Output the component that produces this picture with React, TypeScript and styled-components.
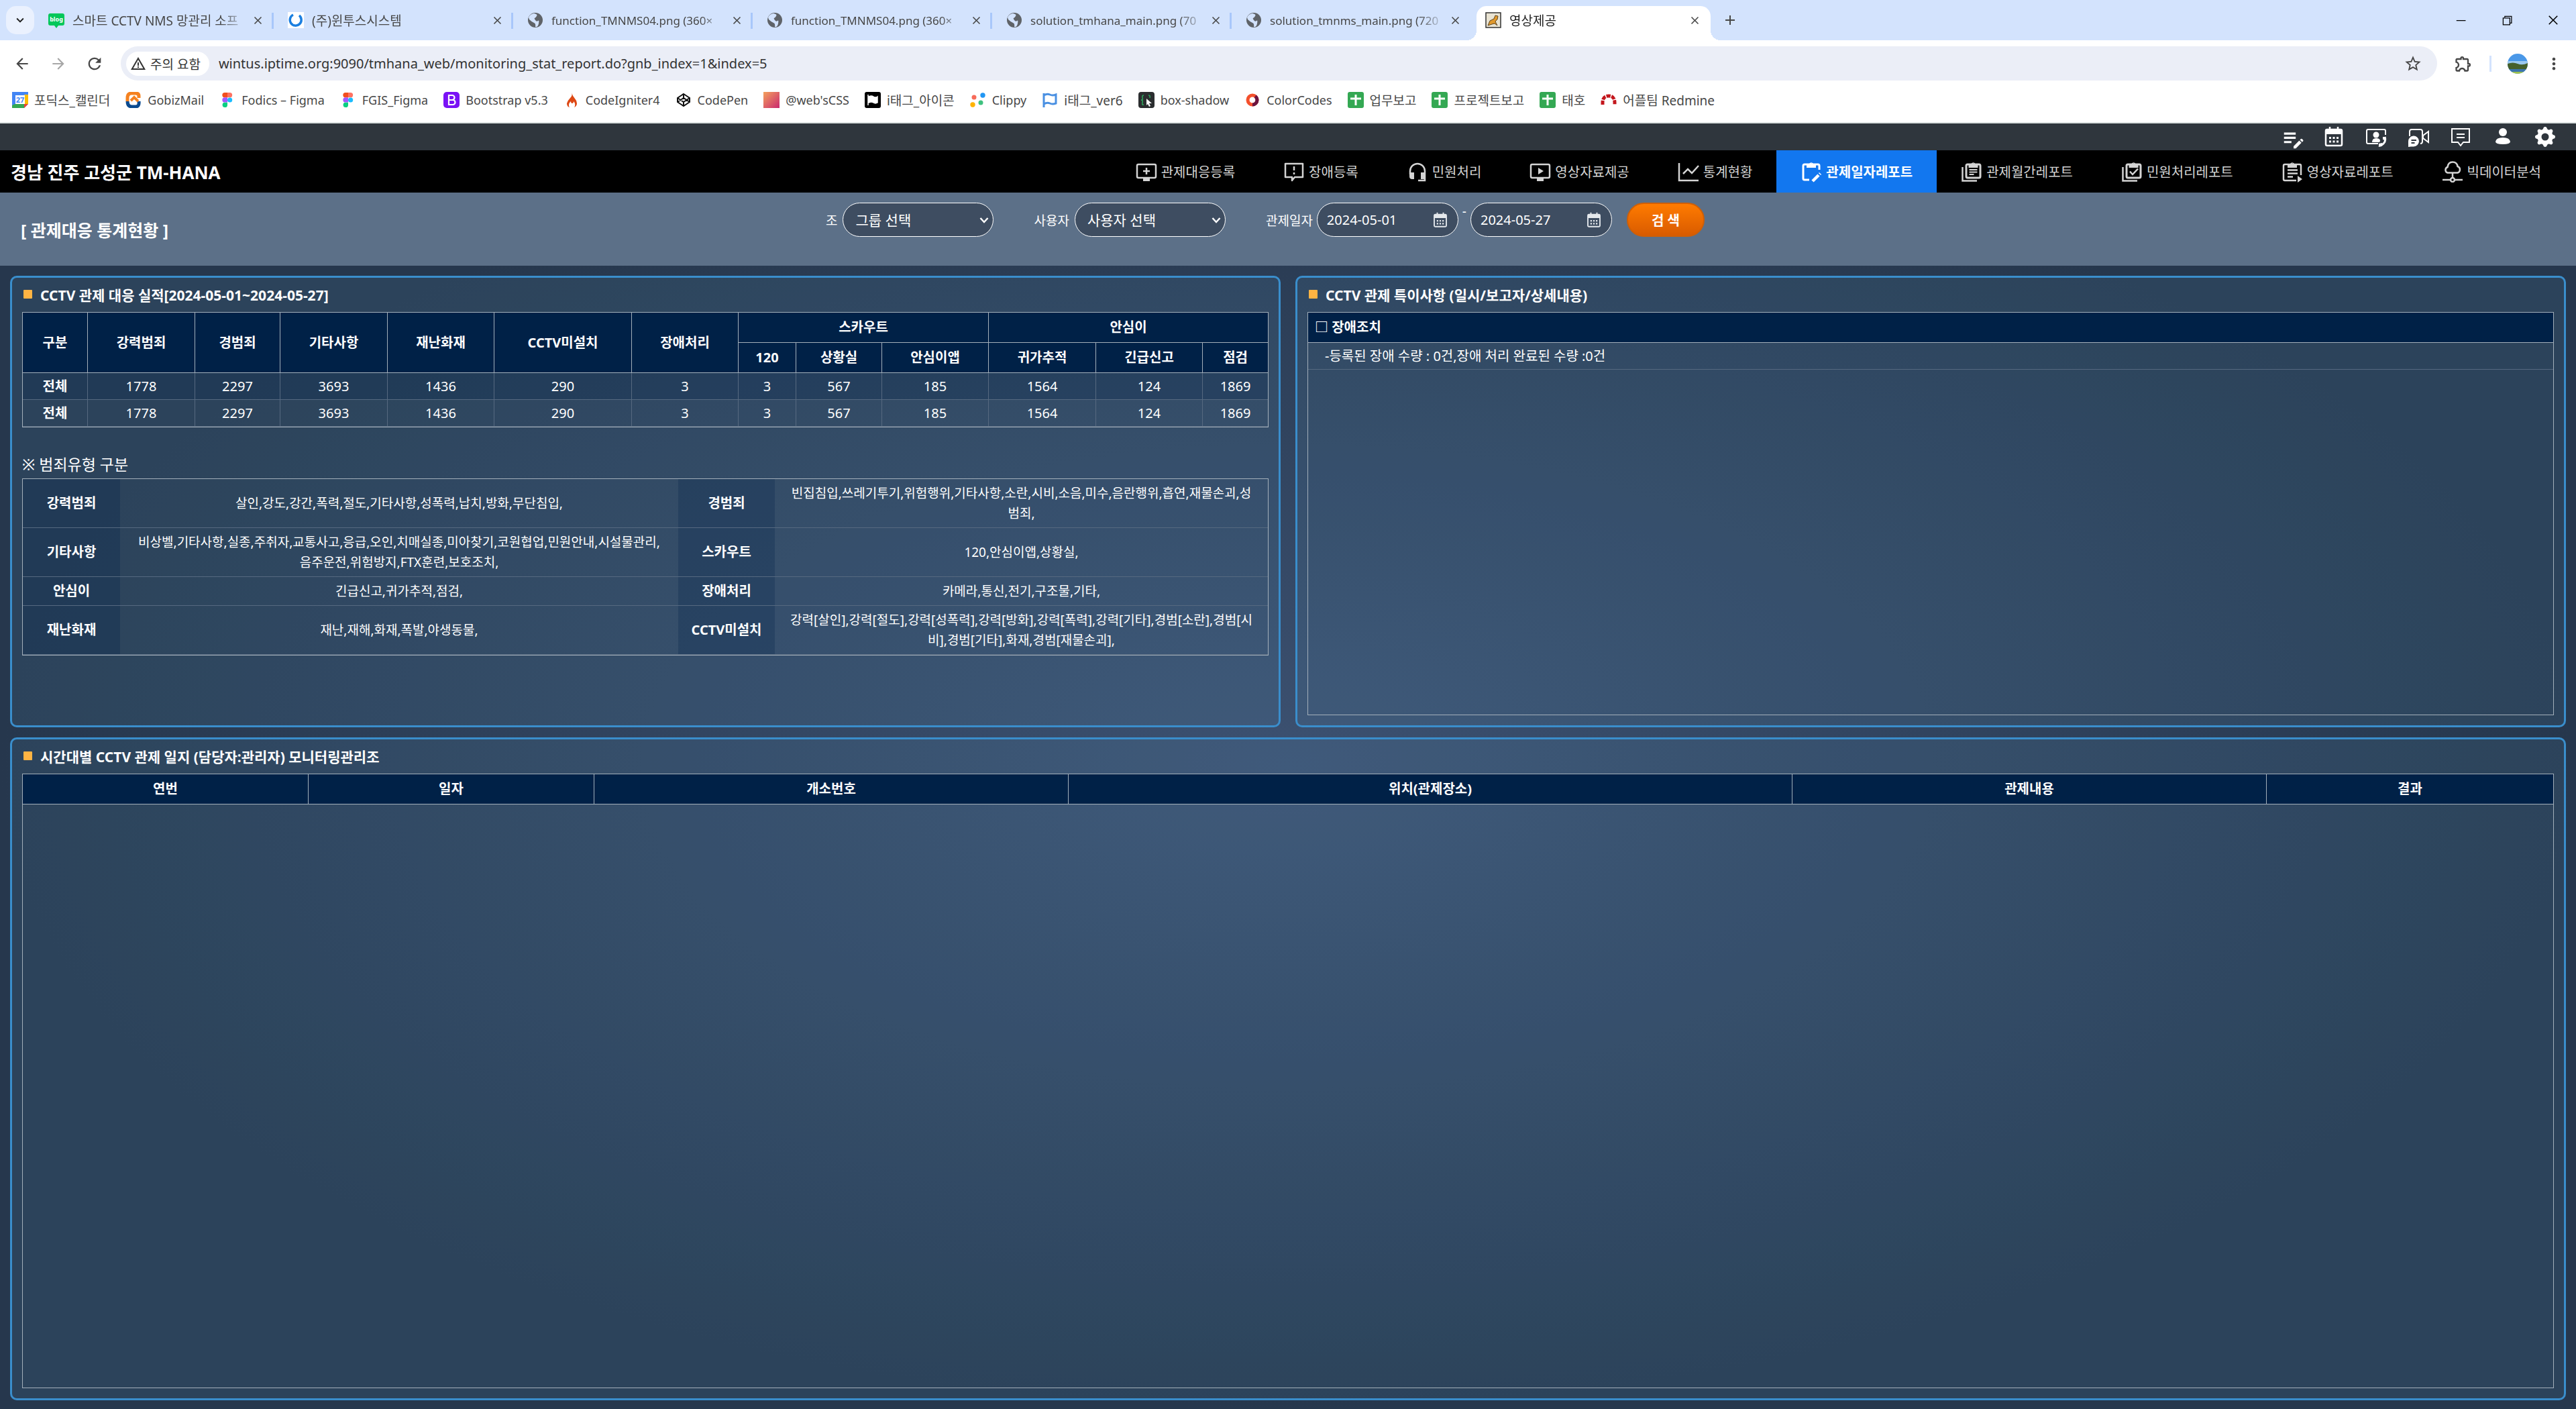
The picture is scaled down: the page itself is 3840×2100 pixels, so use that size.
import React, { useState } from "react";
import styled, { createGlobalStyle, css } from "styled-components";
import { MdArrowBack, MdArrowForward, MdRefresh, MdClose, MdAdd, MdKeyboardArrowDown, MdEditNote, MdMoreVert, MdOutlineExtension, MdStarBorder, MdWarningAmber } from "react-icons/md";
import { BsGearFill } from "react-icons/bs";
import { VscChromeMinimize, VscChromeRestore, VscChromeClose } from "react-icons/vsc";

const line = "#a3afba";
const softLine = "#566980";
const navy = "#002147";

const GlobalStyle = createGlobalStyle`
  *, *::before, *::after { box-sizing: border-box; }
  body { margin: 0; }
  body, button, input, select, table {
    font-family: "Noto Sans", "Noto Sans CJK KR", sans-serif;
  }
  button { border: 0; padding: 0; background: none; color: inherit; cursor: pointer; }
  h1, h2, h3, p { margin: 0; }
`;

const Screen = styled.div`
  display: flex;
  flex-direction: column;
  min-height: 100vh;
  background: #fff;
`;

/* ---------- browser frame ---------- */

const TabStrip = styled.div`
  display: flex;
  align-items: center;
  height: 60px;
  padding-left: 9px;
  background: #d3e3fd;
  color: #1f1f1f;
`;

const TabSearch = styled.button`
  display: grid;
  place-items: center;
  width: 42px;
  height: 42px;
  border-radius: 15px;
  background: #eaf1fe;
`;

const Tab = styled.div<{ $active?: boolean; $hangul?: boolean }>`
  position: relative;
  display: flex;
  align-items: center;
  flex: 0 1 357px;
  min-width: 0;
  gap: 12px;
  height: 51px;
  align-self: flex-end;
  padding: 0 12px 9px 21px;
  font-size: ${(p) => (p.$hangul ? 19 : 17)}px;
  color: ${(p) => (p.$active ? "#1f1f1f" : "#474747")};
  ${(p) =>
    p.$active
      ? css`
          flex-basis: 349px;
          padding: 0 12px 9px 13px;
          margin-left: 8px;
          border-radius: 15px 15px 0 0;
          background: #fff;
          &::before,
          &::after {
            content: "";
            position: absolute;
            bottom: 0;
            width: 15px;
            height: 15px;
          }
          &::before {
            right: 100%;
            background: radial-gradient(circle at 0 0, transparent 15px, #fff 15px);
          }
          &::after {
            left: 100%;
            background: radial-gradient(circle at 100% 0, transparent 15px, #fff 15px);
          }
        `
      : ""}
`;

const TabDivider = styled.i<{ $hidden?: boolean }>`
  position: absolute;
  right: 0;
  top: 10px;
  width: 3px;
  height: 24px;
  background: #a8c7fa;
  display: ${(p) => (p.$hidden ? "none" : "block")};
`;

const TabTitle = styled.span`
  flex: 1;
  min-width: 0;
  white-space: nowrap;
  mask-image: linear-gradient(to right, #000 88%, transparent 104%);
`;

const IconButton = styled.button<{ $size?: number; $dim?: boolean }>`
  display: grid;
  place-items: center;
  flex: none;
  width: ${(p) => p.$size ?? 24}px;
  height: ${(p) => p.$size ?? 24}px;
  color: ${(p) => (p.$dim ? "#a7a7a7" : "#474747")};
`;

const WindowButtons = styled.div`
  display: flex;
  gap: 45px;
  margin-left: auto;
  padding-right: 22px;
  color: #000;
`;

const AddressRow = styled.div`
  display: flex;
  align-items: center;
  gap: 24px;
  height: 69px;
  padding: 0 18px;
  background: #fff;
`;

const Omnibox = styled.div`
  display: flex;
  align-items: center;
  flex: 1;
  gap: 12px;
  height: 51px;
  padding: 0 22px 0 8px;
  border-radius: 26px;
  background: #ebeef7;
`;

const SiteChip = styled.button`
  display: flex;
  align-items: center;
  gap: 6px;
  height: 36px;
  padding: 0 13px 0 6px;
  border-radius: 18px;
  background: #fff;
  font-size: 19px;
  color: #333;
`;

const UrlInput = styled.input`
  flex: 1;
  border: 0;
  outline: 0;
  background: none;
  font-size: 20px;
  color: #333;
`;

const Separator = styled.i`
  width: 3px;
  height: 24px;
  background: #d3e3fd;
`;

const Bookmarks = styled.nav`
  display: flex;
  gap: 23px;
  height: 53px;
  padding: 8px 18px 0;
  background: #fff;
`;

const Bookmark = styled.a<{ $hangul: boolean }>`
  display: flex;
  align-items: center;
  gap: 9px;
  height: 24px;
  font-size: ${(p) => (p.$hangul ? 19 : 18)}px;
  white-space: nowrap;
  color: #474747;
  text-decoration: none;
`;

/* ---------- application ---------- */

const AppArea = styled.div`
  display: flex;
  flex-direction: column;
  flex: 1;
  border-top: 2px solid #dde3e2;
  background: radial-gradient(ellipse closest-side, #3c5171, #26374d);
  color: #fff;
`;

const UtilityBar = styled.div`
  display: flex;
  align-items: center;
  justify-content: flex-end;
  gap: 31px;
  height: 40px;
  padding-right: 30px;
  background: #2f363d;
`;

const UtilityButton = styled.button`
  display: grid;
  place-items: center;
  width: 32px;
  height: 32px;
  color: #fff;
`;

const Header = styled.header`
  display: flex;
  align-items: center;
  justify-content: space-between;
  height: 63px;
  padding: 0 16px;
  background: #000;
`;

const Brand = styled.h1`
  font-size: 26px;
  font-weight: 700;
`;

const MainNav = styled.nav`
  display: flex;
  height: 100%;
`;

const NavItem = styled.a<{ $active?: boolean }>`
  display: flex;
  align-items: center;
  gap: 6px;
  padding: 0 36px;
  font-size: 20px;
  white-space: nowrap;
  text-decoration: none;
  font-weight: ${(p) => (p.$active ? 700 : 400)};
  color: ${(p) => (p.$active ? "#fff" : "#d4d4d4")};
  background: ${(p) => (p.$active ? "#1277ef" : "transparent")};
`;

const SearchBand = styled.section`
  display: flex;
  align-items: center;
  height: 109px;
  padding-left: 31px;
  background: #5c7088;
`;

const PageTitle = styled.h2`
  flex: 0 0 1200px;
  font-size: 25px;
  font-weight: 700;
`;

const Filters = styled.form`
  display: flex;
  align-items: center;
  align-self: flex-start;
  gap: 8px;
  padding-top: 15px;
`;

const Field = styled.label`
  display: flex;
  align-items: center;
  gap: 8px;
  margin-right: 52px;
  font-size: 19px;
`;

const pill = css`
  height: 51px;
  border: 1px solid #fff;
  border-radius: 26px;
  background-color: #3e4d61;
  color: #fff;
  font-size: 21px;
`;

const Select = styled.select`
  ${pill}
  width: 225px;
  padding: 0 10px 0 18px;
  appearance: none;
  background-image: url("data:image/svg+xml,%3Csvg xmlns='http://www.w3.org/2000/svg' width='14' height='10'%3E%3Cpath d='M1.5 2 7 8l5.500-6' fill='none' stroke='white' stroke-width='2.500'/%3E%3C/svg%3E");
  background-repeat: no-repeat;
  background-position: right 6px center;
`;

const DateField = styled.span`
  ${pill}
  display: flex;
  align-items: center;
  justify-content: space-between;
  width: 211px;
  padding: 0 14px;
`;

const DateInput = styled.input`
  width: 130px;
  border: 0;
  padding: 0;
  outline: 0;
  background: none;
  color: inherit;
  font-size: 20px;
`;

const DateButton = styled.button`
  display: grid;
  color: #e4e8ec;
`;

const DateRange = styled.div`
  display: flex;
  gap: 6px;
  margin-right: 14px;
  font-size: 19px;
`;

const DateLabel = styled.span`
  align-self: center;
`;

const SearchButton = styled.button`
  width: 116px;
  height: 51px;
  border: 2px solid #d05f06;
  border-radius: 26px;
  background: linear-gradient(#ff7b00, #d95b00);
  color: #fff;
  font-size: 20px;
  font-weight: 700;
`;

const Panels = styled.main`
  flex: 1;
  display: grid;
  grid-template-columns: repeat(2, minmax(0, 1fr));
  grid-template-rows: 15fr 22fr;
  gap: 15px 22px;
  padding: 15px 15px 13px;
`;

const Panel = styled.section<{ $wide?: boolean }>`
  display: flex;
  flex-direction: column;
  grid-column: ${(p) => (p.$wide ? "1 / -1" : "auto")};
  padding: 0 15px 15px;
  border: 3px solid #3a8ecc;
  border-radius: 10px;
  background: rgba(100, 180, 220, 0.1);
`;

const PanelTitle = styled.h3`
  display: flex;
  align-items: center;
  gap: 12px;
  height: 51px;
  padding: 0 0 2px 2px;
  font-size: 21px;
  font-weight: 700;
  &::before {
    content: "";
    width: 13px;
    height: 13px;
    border-radius: 1px;
    background: #ffb443;
  }
`;

const Frame = styled.div<{ $fill?: boolean }>`
  flex: ${(p) => (p.$fill ? 1 : "none")};
  border: 1px solid ${line};
`;

const Table = styled.table`
  width: 100%;
  table-layout: fixed;
  border-spacing: 0;
  font-size: 20px;
  line-height: 30px;
  text-align: center;
  th,
  td {
    padding: 0;
  }
`;

const HeadCell = styled.th<{ $left?: boolean; $edge?: boolean }>`
  height: 45px;
  border-bottom: 1px solid ${line};
  border-right: ${(p) => (p.$edge ? "0" : `1px solid ${line}`)};
  background: ${navy};
  text-align: ${(p) => (p.$left ? "left" : "center")};
  && {
    padding: ${(p) => (p.$left ? "0 10px" : "0")};
  }
`;

const StatRow = styled.tr<{ $shade?: boolean }>`
  height: 40px;
  background: ${(p) => (p.$shade ? "rgba(0, 33, 71, 0.25)" : "transparent")};
  td,
  th {
    border-bottom: 1px solid ${softLine};
    border-right: 1px solid ${softLine};
  }
  > :last-child {
    border-right: 0;
  }
`;

const NoteCell = styled.td`
  height: 40px;
  border-bottom: 1px solid ${softLine};
  text-align: left;
  && {
    padding-left: 25px;
  }
`;

const SubTitle = styled.h3`
  margin-top: 34px;
  font-size: 23px;
  font-weight: 400;
  line-height: 42px;
`;

const KindTable = styled(Table)`
  th,
  td {
    border-bottom: 1px solid ${softLine};
  }
  th {
    background: rgba(0, 33, 71, 0.25);
  }
  td {
    padding: 6px 20px;
    font-size: 19px;
  }
`;

/* ---------- icons ---------- */

const IconSvg = styled.svg`
  display: block;
  flex: none;
`;

type SvgProps = { size?: number; children: React.ReactNode };
const Line = ({ size = 32, children }: SvgProps) => (
  <IconSvg width={size} height={size} viewBox="0 0 32 32" fill="none" stroke="currentColor" strokeWidth="2.5" aria-hidden="true">
    {children}
  </IconSvg>
);
const Mark = ({ children }: SvgProps) => (
  <IconSvg width="24" height="24" viewBox="0 0 24 24" aria-hidden="true">
    {children}
  </IconSvg>
);

const Calendar = ({ size }: { size?: number }) => (
  <Line size={size}>
    <path d="M6 5h20q2 0 2 2v20q0 2-2 2H6q-2 0-2-2V7q0-2 2-2z" />
    <path d="M4 5h24v7H4z" fill="currentColor" stroke="none" />
    <path d="M10 1v6M22 1v6" />
    <path d="M9 17.500h3m2.500 0h3m2.500 0h3M9 23h3m2.500 0h3m2.500 0h3" strokeWidth="3" />
  </Line>
);
const MonitorPlus = () => (
  <Line><rect x="2" y="5" width="28" height="20" rx="2" /><path d="M16 10v10M11 15h10" /><path d="M11 28h10" strokeWidth="4" /></Line>
);
const AlertBubble = () => (
  <Line><path d="M3 4h26v20H17l-4 5v-5H3z" strokeLinejoin="round" /><path d="M16 8v6M16 17v3" /></Line>
);
const Headset = () => (
  <Line><path d="M5 20v-5a11 11 0 0 1 22 0v14H17" /><path d="M4 17h7v10H8q-4 0-4-4zM21 17h7v10h-7z" fill="currentColor" stroke="none" /></Line>
);
const MonitorPlay = () => (
  <Line><rect x="2" y="5" width="28" height="20" rx="2" /><path d="M13 10l8 5-8 5z" fill="currentColor" stroke="none" /><path d="M11 28h10" strokeWidth="4" /></Line>
);
const ChartLine = () => (
  <Line><path d="M2 3v26h29M8 19l7-7 6 6L31 7" /></Line>
);
const Clip = ({ x = 0 }: { x?: number }) => (
  <path transform={`translate(${x} 0)`} d="M9 4h4a3.500 3.500 0 0 1 6 0h4v6H9z M16 3.500a1.300 1.300 0 1 0 .1 0z" fill="currentColor" fillRule="evenodd" stroke="none" />
);
const ClipboardEdit = () => (
  <Line><path d="M13 28H6q-2 0-2-2V7q0-2 2-2h20q2 0 2 2v6" strokeWidth="3" /><Clip /><path d="M18 30l9-9M28.500 19.500l1-1" strokeWidth="4.500" /></Line>
);
const ClipboardCopy = ({ children }: { children: React.ReactNode }) => (
  <Line><rect x="8" y="5" width="21" height="20" rx="2" strokeWidth="3" /><Clip x={2.5} />{children}<path d="M2.500 9v20.500H24" /></Line>
);
const ClipboardPlay = () => (
  <Line><path d="M22 29H5q-2 0-2-2V7q0-2 2-2h22q2 0 2 2v14" /><Clip /><path d="M9 13.500h15M9 18.500h15M9 23.500h8" /><path d="M24 22l7 5-7 5z" fill="currentColor" stroke="none" /></Line>
);
const CloudNet = () => (
  <Line><path d="M8.500 17.500a4.500 4.500 0 0 1 0-8.500q1-7.500 7.500-7.500T23.500 8a5 5 0 0 1 0 9.500zM16 18v8M1 28h30" /><circle cx="16" cy="28" r="3" fill="#000" /></Line>
);
const ContactPhone = () => (
  <Line><path d="M19 26H4q-2 0-2-2V7q0-2 2-2h24q2 0 2 2v6" strokeWidth="2" /><circle cx="16" cy="13" r="4.500" fill="currentColor" stroke="none" /><path d="M10 24q0-6 6-6t6 4l-1 2z" fill="currentColor" stroke="none" /><path d="M29 16q2 6-2 10t-7 3" strokeWidth="3" /><path d="M26 16h4v5l-4-1zM20 26l5-1v5h-5z" fill="currentColor" stroke="none" /></Line>
);
const VideoChat = () => (
  <Line><path d="M3 15V8q0-3 3-3h13q3 0 3 3v15q0 3-3 3M31 8v16l-8-6v-4z" strokeWidth="2" /><path d="M1 31v-8a8 8 0 1 1 8 7.500H5z" fill="currentColor" stroke="none" /><path d="M5.500 21h7.500M5.500 25h5" stroke="#2f363d" strokeWidth="2" /></Line>
);
const MessageBox = () => (
  <Line><path d="M3 4h26v20h-9l-4 5-4-5H3z" strokeWidth="2" /><path d="M10 12h12M10 17h12" strokeWidth="2" /></Line>
);
const Person = () => (
  <Line><circle cx="16" cy="9" r="6" fill="currentColor" stroke="none" /><path d="M5 23q1-6 11-6t11 6q0 4-11 4T5 23z" fill="currentColor" stroke="none" /></Line>
);

const Figma = () => (
  <Mark><path d="M12 1H8a3.600 3.600 0 0 0 0 7.300h4z" fill="#f24e1e" /><path d="M12 1h3.500a3.600 3.600 0 0 1 0 7.300H12z" fill="#ff7262" /><path d="M12 8.300H8a3.600 3.600 0 0 0 0 7.300h4z" fill="#a259ff" /><circle cx="15.600" cy="12" r="3.600" fill="#1abcfe" /><path d="M12 15.700H8a3.700 3.700 0 1 0 4 3.700z" fill="#0acf83" /></Mark>
);
const Sheet = () => (
  <Mark><rect width="24" height="24" rx="3" fill="#34a853" /><path d="M12 4v16M4 10h16" stroke="#fff" strokeWidth="3" /></Mark>
);

const bookmarks: [string, React.ReactNode][] = [
  ["포딕스_캘린더", <Mark><path d="M0 0h24v18l-6 6H0z" fill="#4285f4" /><path d="M18 4h6v14h-6z" fill="#fbbc04" /><path d="M4 18h14v6H0v-4z" fill="#34a853" /><path d="M24 18l-6 6v-6z" fill="#ea4335" /><path d="M5 5h14v13H5z" fill="#fff" /><text x="12" y="16" fontSize="11" fontWeight="700" textAnchor="middle" fill="#4285f4">27</text></Mark>],
  ["GobizMail", <Mark><path d="M20 9V6q0-4-5-4H9Q3 2 3 9v5" fill="none" stroke="#f58220" strokeWidth="5" /><path d="M3 14q0 8 7 8h5q6 0 5-8" fill="none" stroke="#0b4a8f" strokeWidth="5" /><path d="M8 13l5-5 6 6" fill="none" stroke="#f58220" strokeWidth="4" /></Mark>],
  ["Fodics – Figma", <Figma />],
  ["FGIS_Figma", <Figma />],
  ["Bootstrap v5.3", <Mark><rect width="24" height="24" rx="5" fill="#7a12f5" /><path d="M8 5h5a3.300 3.300 0 0 1 0 7H8zM8 12h6a3.500 3.500 0 0 1 0 7H8z" fill="none" stroke="#fff" strokeWidth="2.200" /></Mark>],
  ["CodeIgniter4", <Mark><path d="M12 1q2 4-2 8t-5 8q0 5 4 6-3-5 2-9 0 3 2 3t2-3q4 4 1 9 4-2 4-6 0-4-3-7t-5-9z" fill="#dd4814" /></Mark>],
  ["CodePen", <Mark><path d="M12 3l9 6v6l-9 6-9-6V9zM12 3v6m0 6v6M3 9l9 6 9-6M3 15l9-6 9 6" fill="none" stroke="#111" strokeWidth="2" /></Mark>],
  ["@web'sCSS", <Mark><defs><linearGradient id="warm" x1="0" y1="0" x2="1" y2="1"><stop stopColor="#f4a15d" /><stop offset="1" stopColor="#c9286f" /></linearGradient></defs><rect width="24" height="24" fill="url(#warm)" /></Mark>],
  ["i태그_아이콘", <Mark><rect width="24" height="24" rx="3" fill="#000" /><path d="M5 4v16M6 7q4-2 7 0t6 0v9q-3 2-6 0t-7 0z" fill="#fff" stroke="#fff" strokeWidth="1.500" /></Mark>],
  ["Clippy", <Mark><circle cx="6" cy="8" r="3.500" fill="#f76b5a" /><circle cx="19" cy="5" r="3.700" fill="#2196f3" /><circle cx="16" cy="16" r="3.500" fill="#3fc17f" /><circle cx="4" cy="19" r="3.700" fill="#ffb300" /></Mark>],
  ["i태그_ver6", <Mark><path d="M3 2v21M3 5q5-3 9-1t9 0v13q-5 2-9 0t-9 1" fill="none" stroke="#4a90e2" strokeWidth="3" /></Mark>],
  ["box-shadow", <Mark><rect width="24" height="24" rx="4" fill="#2b2d2f" /><path d="M8 5q-3 0-2 4t-2 3q3 0 2 4t2 3M15 5q3 0 2 4" fill="none" stroke="#2f9e5a" strokeWidth="1.700" /><path d="M12 10l8 7h-4l2 4-2 1-2-4-2 2z" fill="#fff" /></Mark>],
  ["ColorCodes", <Mark><circle cx="12" cy="12" r="7" fill="none" stroke="#f4502c" strokeWidth="5" /><path d="M12 19a7 7 0 0 0 7-7 7 7 0 0 0-3-5.500" fill="none" stroke="#6b1440" strokeWidth="5" /></Mark>],
  ["업무보고", <Sheet />],
  ["프로젝트보고", <Sheet />],
  ["태호", <Sheet />],
  ["어플팀 Redmine", <Mark><path d="M3 19v-3q0-10 9-10t9 10v3" fill="none" stroke="#c3161c" strokeWidth="5" strokeDasharray="6 1.500" /></Mark>],
];

const FelineIcon = () => (
  <Mark><rect x="1" y="1" width="22" height="22" fill="#e9e3d2" stroke="#333" strokeWidth="1.500" /><path d="M4 20l3-7 6-3 2-5 4 1-1 5-3 3 3 6-4-3-4 1z" fill="#e0982c" stroke="#5c4420" /></Mark>
);
const Globe = () => (
  <Mark><circle cx="12" cy="12" r="11" fill="#5f6368" /><path d="M10 2q6 1 4 4t-3 3 1 3 4 1 1 4-5 5q1-5-2-6t-7-5l-1-3q2-5 8-6z" fill="#d3e3fd" /></Mark>
);

const tabs: { title: string; icon: React.ReactNode; active?: boolean }[] = [
  { title: "스마트 CCTV NMS 망관리 소프", icon: <Mark><path d="M3 2h18q3 0 3 3v12q0 3-3 3h-6l-3 4-3-4H3q-3 0-3-3V5q0-3 3-3z" fill="#03c75a" /><text x="12" y="14" fontSize="9" fontWeight="700" textAnchor="middle" fill="#fff">blog</text></Mark> },
  { title: "(주)윈투스시스템", icon: <Mark><rect width="24" height="24" fill="#fff" /><path d="M8 4a8.500 8.500 0 1 0 9 1" fill="none" stroke="#1b7fe0" strokeWidth="3.500" /></Mark> },
  { title: "function_TMNMS04.png (360×", icon: <Globe /> },
  { title: "function_TMNMS04.png (360×", icon: <Globe /> },
  { title: "solution_tmhana_main.png (70", icon: <Globe /> },
  { title: "solution_tmnms_main.png (720", icon: <Globe /> },
  { title: "영상제공", icon: <FelineIcon />, active: true },
];

const hasHangul = (s: string) => /[가-힣]/.test(s);

const utilities: [string, React.ReactNode][] = [
  ["메모", <MdEditNote size={38} />],
  ["달력", <Calendar />],
  ["연락처", <ContactPhone />],
  ["영상 채팅", <VideoChat />],
  ["메시지", <MessageBox />],
  ["사용자 정보", <Person />],
  ["설정", <BsGearFill size={30} />],
];

const menu: [string, React.ReactNode][] = [
  ["관제대응등록", <MonitorPlus />],
  ["장애등록", <AlertBubble />],
  ["민원처리", <Headset />],
  ["영상자료제공", <MonitorPlay />],
  ["통계현황", <ChartLine />],
  ["관제일자레포트", <ClipboardEdit />],
  ["관제월간레포트", <ClipboardCopy><path d="M12.500 13h12M12.500 16.500h12M12.500 20h7" strokeWidth="2" /></ClipboardCopy>],
  ["민원처리레포트", <ClipboardCopy><path d="M13 15.500l4 4.500 8-8.500" /></ClipboardCopy>],
  ["영상자료레포트", <ClipboardPlay />],
  ["빅데이터분석", <CloudNet />],
];

const statCols = [97, 160, 127, 160, 159, 205, 159, 86, 128, 159, 160, 159, 97];
const statHeads = ["구분", "강력범죄", "경범죄", "기타사항", "재난화재", "CCTV미설치", "장애처리"];
const subHeads = ["120", "상황실", "안심이앱", "귀가추적", "긴급신고", "점검"];
const stats = [1778, 2297, 3693, 1436, 290, 3, 3, 567, 185, 1564, 124, 1869];

const kinds = [
  ["강력범죄", "살인,강도,강간,폭력,절도,기타사항,성폭력,납치,방화,무단침입,", "경범죄", "빈집침입,쓰레기투기,위험행위,기타사항,소란,시비,소음,미수,음란행위,흡연,재물손괴,성범죄,"],
  ["기타사항", "비상벨,기타사항,실종,주취자,교통사고,응급,오인,치매실종,미아찾기,코원협업,민원안내,시설물관리,음주운전,위험방지,FTX훈련,보호조치,", "스카우트", "120,안심이앱,상황실,"],
  ["안심이", "긴급신고,귀가추적,점검,", "장애처리", "카메라,통신,전기,구조물,기타,"],
  ["재난화재", "재난,재해,화재,폭발,야생동물,", "CCTV미설치", "강력[살인],강력[절도],강력[성폭력],강력[방화],강력[폭력],강력[기타],경범[소란],경범[시비],경범[기타],화재,경범[재물손괴],"],
];

const logCols: [string, number][] = [["연번", 426], ["일자", 426], ["개소번호", 707], ["위치(관제장소)", 1079], ["관제내용", 707], ["결과", 427]];

const Columns = ({ widths }: { widths: number[] }) => (
  <colgroup>{widths.map((w, i) => <col key={i} style={{ width: w }} />)}</colgroup>
);

function BrowserFrame() {
  const [url, setUrl] = useState("wintus.iptime.org:9090/tmhana_web/monitoring_stat_report.do?gnb_index=1&index=5");
  return (
    <>
      <TabStrip>
        <TabSearch aria-label="탭 검색"><MdKeyboardArrowDown size={22} /></TabSearch>
        {tabs.map((t, i) => (
          <Tab key={i} $active={t.active} $hangul={hasHangul(t.title)}>
            {t.icon}
            <TabTitle>{t.title}</TabTitle>
            <IconButton aria-label="탭 닫기"><MdClose size={19} /></IconButton>
            <TabDivider $hidden={i > 4} />
          </Tab>
        ))}
        <IconButton $size={58} aria-label="새 탭"><MdAdd size={24} /></IconButton>
        <WindowButtons>
          <IconButton aria-label="최소화"><VscChromeMinimize size={20} color="#000" /></IconButton>
          <IconButton aria-label="이전 크기로"><VscChromeRestore size={20} color="#000" /></IconButton>
          <IconButton aria-label="닫기"><VscChromeClose size={20} color="#000" /></IconButton>
        </WindowButtons>
      </TabStrip>
      <AddressRow>
        <IconButton $size={30} aria-label="뒤로"><MdArrowBack size={26} /></IconButton>
        <IconButton $size={30} $dim aria-label="앞으로"><MdArrowForward size={26} /></IconButton>
        <IconButton $size={30} aria-label="새로고침"><MdRefresh size={28} /></IconButton>
        <Omnibox>
          <SiteChip><MdWarningAmber size={24} />주의 요함</SiteChip>
          <UrlInput aria-label="주소" value={url} onChange={(e) => setUrl(e.target.value)} />
          <IconButton $size={28} aria-label="북마크"><MdStarBorder size={28} /></IconButton>
        </Omnibox>
        <IconButton $size={30} aria-label="확장 프로그램"><MdOutlineExtension size={28} /></IconButton>
        <Separator />
        <IconButton $size={30} aria-label="프로필">
          <svg width="30" height="30" viewBox="0 0 30 30"><defs><clipPath id="face"><circle cx="15" cy="15" r="15" /></clipPath></defs><g clipPath="url(#face)"><path d="M0 0h30v30H0z" fill="#4a98e8" /><path d="M0 11h30v6H0z" fill="#9cc9ee" /><path d="M0 15q8-3 15 0t15-1v10H0z" fill="#45602a" /><path d="M0 23h30v4H0z" fill="#3b74ad" /><path d="M0 27h30v3H0z" fill="#9fc24d" /></g></svg>
        </IconButton>
        <IconButton $size={30} aria-label="메뉴"><MdMoreVert size={28} /></IconButton>
      </AddressRow>
      <Bookmarks aria-label="북마크">
        {bookmarks.map(([name, icon]) => (
          <Bookmark key={name} href="#" $hangul={hasHangul(name)}>{icon}{name}</Bookmark>
        ))}
      </Bookmarks>
    </>
  );
}

function DateBox({ label, value, onChange }: { label: string; value: string; onChange: (v: string) => void }) {
  return (
    <DateField>
      <DateInput aria-label={label} value={value} onChange={(e) => onChange(e.target.value)} />
      <DateButton type="button" aria-label="달력 열기"><Calendar size={24} /></DateButton>
    </DateField>
  );
}

function SearchForm() {
  const [from, setFrom] = useState("2024-05-01");
  const [to, setTo] = useState("2024-05-27");
  return (
    <SearchBand>
      <PageTitle>[ 관제대응 통계현황 ]</PageTitle>
      <Filters onSubmit={(e) => e.preventDefault()}>
        <Field>조<Select><option>그룹 선택</option></Select></Field>
        <Field>사용자<Select><option>사용자 선택</option></Select></Field>
        <DateRange>
          <DateLabel>관제일자</DateLabel>
          <DateBox label="시작일" value={from} onChange={setFrom} />
          <span>-</span>
          <DateBox label="종료일" value={to} onChange={setTo} />
        </DateRange>
        <SearchButton>검 색</SearchButton>
      </Filters>
    </SearchBand>
  );
}

function StatTable() {
  return (
    <Frame>
      <Table>
        <Columns widths={statCols} />
        <thead>
          <tr>
            {statHeads.map((h) => <HeadCell key={h} rowSpan={2}>{h}</HeadCell>)}
            <HeadCell colSpan={3}>스카우트</HeadCell>
            <HeadCell colSpan={3} $edge>안심이</HeadCell>
          </tr>
          <tr>{subHeads.map((h, i) => <HeadCell key={h} $edge={i === 5}>{h}</HeadCell>)}</tr>
        </thead>
        <tbody>
          {[true, false].map((shade) => (
            <StatRow key={String(shade)} $shade={shade}>
              <th>전체</th>
              {stats.map((v, i) => <td key={i}>{v}</td>)}
            </StatRow>
          ))}
        </tbody>
      </Table>
    </Frame>
  );
}

export default function App() {
  return (
    <Screen>
      <GlobalStyle />
      <BrowserFrame />
      <AppArea>
        <UtilityBar>
          {utilities.map(([name, icon]) => <UtilityButton key={name} aria-label={name}>{icon}</UtilityButton>)}
        </UtilityBar>
        <Header>
          <Brand>경남 진주 고성군 TM-HANA</Brand>
          <MainNav>
            {menu.map(([name, icon], i) => <NavItem key={name} href="#" $active={i === 5}>{icon}{name}</NavItem>)}
          </MainNav>
        </Header>
        <SearchForm />
        <Panels>
          <Panel>
            <PanelTitle>CCTV 관제 대응 실적[2024-05-01~2024-05-27]</PanelTitle>
            <StatTable />
            <SubTitle>※ 범죄유형 구분</SubTitle>
            <Frame>
              <KindTable>
                <Columns widths={[145, 832, 144, 735]} />
                <tbody>
                  {kinds.map(([a, b, c, d]) => (
                    <tr key={a}><th>{a}</th><td>{b}</td><th>{c}</th><td>{d}</td></tr>
                  ))}
                </tbody>
              </KindTable>
            </Frame>
          </Panel>
          <Panel>
            <PanelTitle>CCTV 관제 특이사항 (일시/보고자/상세내용)</PanelTitle>
            <Frame $fill>
              <Table>
                <thead><tr><HeadCell $left $edge>□ 장애조치</HeadCell></tr></thead>
                <tbody><tr><NoteCell>-등록된 장애 수량 : 0건,장애 처리 완료된 수량 :0건</NoteCell></tr></tbody>
              </Table>
            </Frame>
          </Panel>
          <Panel $wide>
            <PanelTitle>시간대별 CCTV 관제 일지 (담당자:관리자) 모니터링관리조</PanelTitle>
            <Frame $fill>
              <Table>
                <Columns widths={logCols.map((c) => c[1])} />
                <thead><tr>{logCols.map(([h], i) => <HeadCell key={h} $edge={i === 5}>{h}</HeadCell>)}</tr></thead>
              </Table>
            </Frame>
          </Panel>
        </Panels>
      </AppArea>
    </Screen>
  );
}
